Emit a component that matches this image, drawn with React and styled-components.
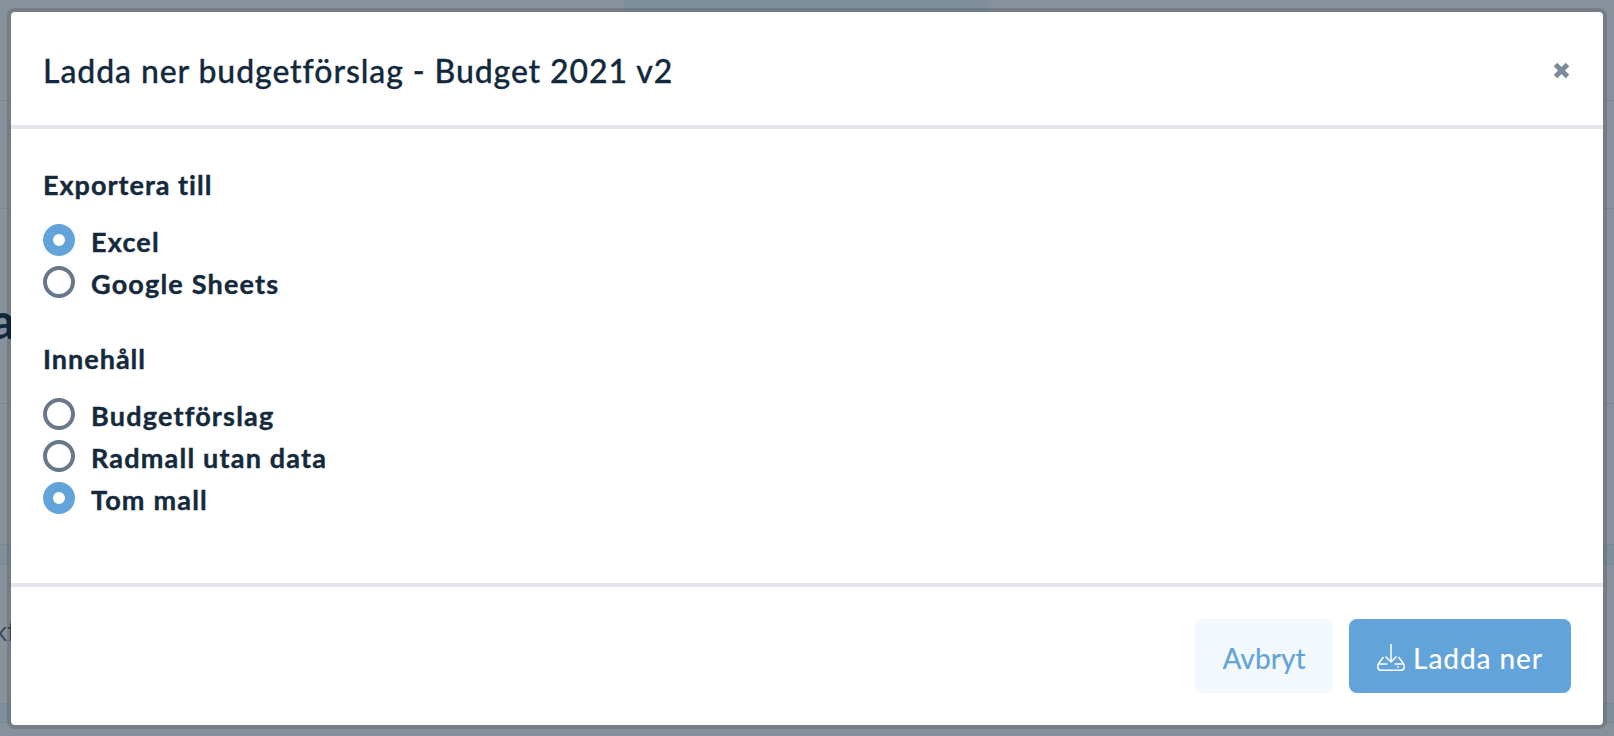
import React from "react";
import styled, { createGlobalStyle } from "styled-components";

const App = () => {
  return (
    <>
      <GlobalStyle />
      <Page>
        <Backdrop>
          <TopBar>
            <ActiveTab />
          </TopBar>
          <BackdropRow $height={107} />
          <BackdropRow $height={194}>
            <PageHeading>a</PageHeading>
          </BackdropRow>
          <BackdropRow $height={140} $noLine />
          <BackdropBand $height={19} />
          <BackdropRow $height={138} $noLine>
            <SmallText>kf</SmallText>
          </BackdropRow>
          <BackdropBand $height={18} />
        </Backdrop>
        <Modal>
          <Header>
            <Title>Ladda ner budgetförslag - Budget 2021 v2</Title>
            <CloseButton aria-label="Stäng">
              <svg width="17" height="17" viewBox="0 0 17 17">
                <path d="M2.5 2.5 L14.5 14.5 M14.5 2.5 L2.5 14.5" stroke="#7c8b99" strokeWidth="5" />
              </svg>
            </CloseButton>
          </Header>
          <Body>
            <Group>
              <GroupTitle>Exportera till</GroupTitle>
              <Options>
                <Option>
                  <Radio $checked />
                  <OptionText>Excel</OptionText>
                </Option>
                <Option>
                  <Radio />
                  <OptionText>Google Sheets</OptionText>
                </Option>
              </Options>
            </Group>
            <Group>
              <GroupTitle>Innehåll</GroupTitle>
              <Options>
                <Option>
                  <Radio />
                  <OptionText>Budgetförslag</OptionText>
                </Option>
                <Option>
                  <Radio />
                  <OptionText>Radmall utan data</OptionText>
                </Option>
                <Option>
                  <Radio $checked />
                  <OptionText>Tom mall</OptionText>
                </Option>
              </Options>
            </Group>
          </Body>
          <Footer>
            <CancelButton>Avbryt</CancelButton>
            <DownloadButton>
              <svg width="28" height="27" viewBox="0 0 28 27" fill="none" stroke="#fff" strokeWidth="1.5">
                <path d="M14 0 V18 M8.5 12.5 L14 18 L19.5 12.5" />
                <path d="M6.5 13 L1.6 19.5 Q0.8 20.6 0.8 22 V23 Q0.8 26.2 4 26.2 H24 Q27.2 26.2 27.2 23 V22 Q27.2 20.6 26.4 19.5 L21.5 13" />
                <path d="M2 20 H10.5 M17.5 20 H26" />
                <circle cx="21" cy="23" r="0.9" fill="#fff" stroke="none" />
              </svg>
              Ladda ner
            </DownloadButton>
          </Footer>
        </Modal>
      </Page>
    </>
  );
};

export default App;

const GlobalStyle = createGlobalStyle`
  html, body {
    margin: 0;
    padding: 0;
    height: 100%;
    overflow: hidden;
  }
  body {
    font-family: "Lato", "Liberation Sans", sans-serif;
  }
`;

const Page = styled.div`
  position: relative;
  width: 1614px;
  height: 736px;
  overflow: hidden;
  background-color: #87919b;
`;

const Backdrop = styled.div`
  display: flex;
  flex-direction: column;
`;

const TopBar = styled.div`
  height: 100px;
  display: flex;
  justify-content: center;
  border-bottom: 1px solid #7b8791;
`;

const ActiveTab = styled.div`
  width: 364px;
  height: 100%;
  margin-left: -2px;
  background-color: #7f8f9a;
`;

const BackdropRow = styled.div`
  position: relative;
  height: ${(p) => p.$height}px;
  flex-shrink: 0;
  border-bottom: ${(p) => (p.$noLine ? "none" : "1px solid #7b8791")};
`;

const BackdropBand = styled.div`
  height: ${(p) => p.$height}px;
  flex-shrink: 0;
  background-color: #7f8f9a;
  border-top: 1px solid #7b8791;
  border-bottom: 1px solid #7b8791;
`;

const PageHeading = styled.span`
  position: absolute;
  left: -10px;
  top: 81px;
  font-size: 50px;
  line-height: 60px;
  font-weight: 700;
  color: #12293d;
`;

const SmallText = styled.span`
  position: absolute;
  left: -6px;
  top: 50px;
  font-size: 26px;
  line-height: 32px;
  color: #3c4c5b;
`;

const Modal = styled.div`
  position: absolute;
  left: 7px;
  top: 8px;
  width: 1600px;
  height: 721px;
  box-sizing: border-box;
  display: flex;
  flex-direction: column;
  background-color: #fff;
  background-clip: padding-box;
  border: 4px solid rgba(0, 0, 0, 0.13);
  border-radius: 8px;
`;

const Header = styled.div`
  height: 117px;
  flex-shrink: 0;
  box-sizing: border-box;
  display: flex;
  align-items: center;
  justify-content: space-between;
  padding: 4px 33px 0 32px;
  border-bottom: 4px solid #e2e4ec;
`;

const Title = styled.h1`
  margin: 0;
  font-size: 32px;
  font-weight: 500;
  letter-spacing: 0.9px;
  -webkit-text-stroke: 0.3px #12293d;
  color: #12293d;
`;

const CloseButton = styled.button`
  display: flex;
  padding: 0;
  border: none;
  background: none;
`;

const Body = styled.div`
  flex: 1;
  display: flex;
  flex-direction: column;
  gap: 45px;
  padding: 40px 32px 0;
`;

const Group = styled.div`
  display: flex;
  flex-direction: column;
  gap: 23px;
`;

const GroupTitle = styled.div`
  font-size: 27px;
  font-weight: 700;
  letter-spacing: 1px;
  line-height: 32px;
  -webkit-text-stroke: 0.4px #15293c;
  color: #15293c;
`;

const Options = styled.div`
  display: flex;
  flex-direction: column;
  gap: 10px;
`;

const Option = styled.label`
  display: flex;
  align-items: center;
  gap: 16px;
  height: 32px;
`;

const OptionText = styled.span`
  padding-top: 3px;
  font-size: 27px;
  font-weight: 700;
  letter-spacing: 1.2px;
  line-height: 29px;
  -webkit-text-stroke: 0.4px #15293c;
  color: #15293c;
`;

const Radio = styled.span`
  width: 32px;
  height: 32px;
  box-sizing: border-box;
  border-radius: 50%;
  background-color: #fff;
  border: ${(p) => (p.$checked ? "10.5px solid #62a4d9" : "4px solid #68778a")};
`;

const Footer = styled.div`
  height: 142px;
  flex-shrink: 0;
  box-sizing: border-box;
  display: flex;
  align-items: center;
  justify-content: flex-end;
  gap: 16px;
  padding-right: 32px;
  border-top: 4px solid #e2e4ec;
`;

const CancelButton = styled.button`
  width: 138px;
  height: 74px;
  padding: 4px 0 0;
  border: none;
  border-radius: 8px;
  background-color: #f3f8fc;
  color: #62a4d9;
  font-family: inherit;
  font-size: 28px;
  font-weight: 500;
`;

const DownloadButton = styled.button`
  width: 222px;
  height: 74px;
  padding: 3px 0 0;
  display: flex;
  align-items: center;
  justify-content: center;
  gap: 8px;
  border: none;
  border-radius: 8px;
  background-color: #62a4d9;
  color: #fff;
  font-family: inherit;
  font-size: 28px;
  font-weight: 500;
  letter-spacing: 0.9px;
`;
